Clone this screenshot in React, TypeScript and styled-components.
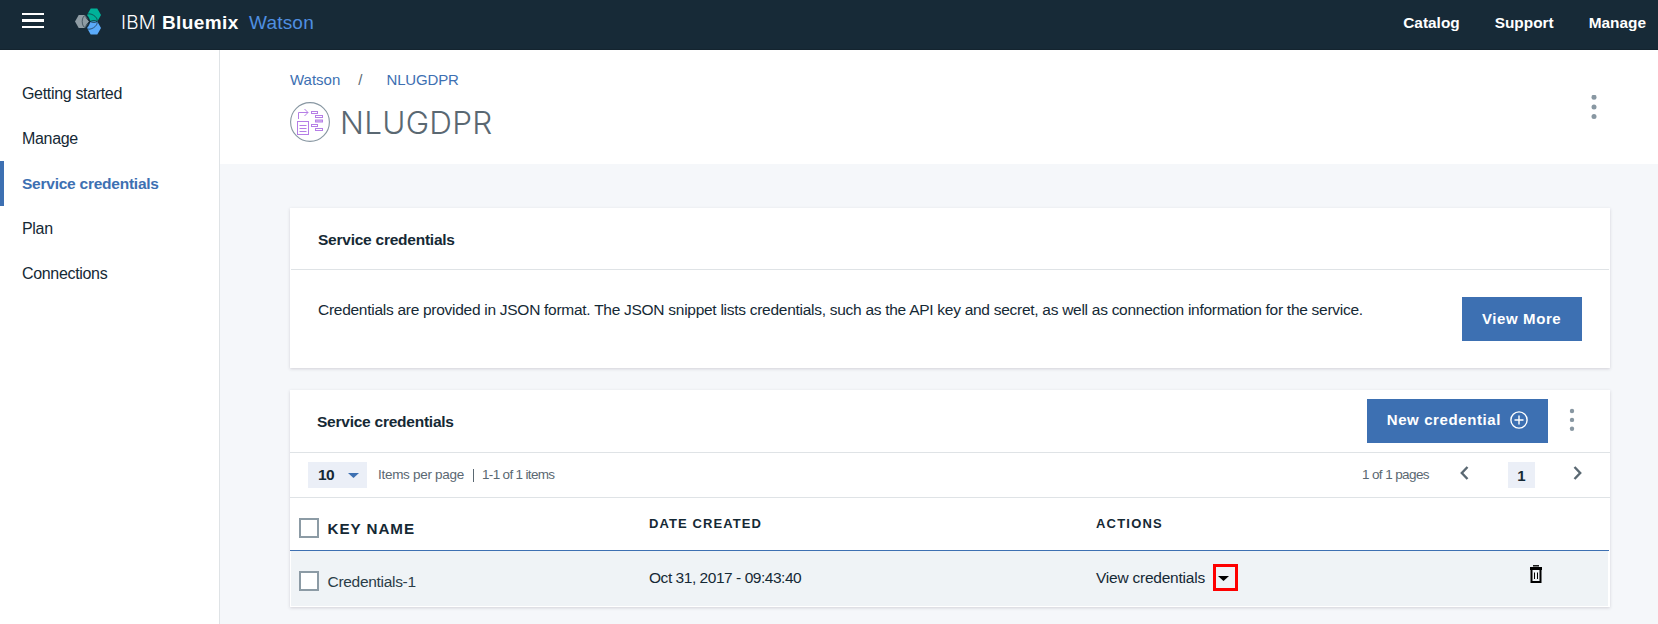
import React from 'react';
import styled, { createGlobalStyle } from 'styled-components';

const Global = createGlobalStyle`
  * { box-sizing: border-box; }
  html, body { margin: 0; }
  body {
    font-family: "Liberation Sans", Arial, sans-serif;
    color: #152935;
    background: #f5f7fa;
    overflow: hidden;
  }
  a { text-decoration: none; color: inherit; }
  button { font-family: inherit; border: 0; padding: 0; background: none; color: inherit; }
`;

const Page = styled.div`
  height: 624px;
  display: flex;
  flex-direction: column;
`;

const TopBar = styled.header`
  height: 50px;
  flex: none;
  background: #172a37;
  border-bottom: 1px solid #14242f;
  color: #fff;
  display: flex;
  align-items: center;
  padding: 0 12px 0 22px;
`;

const MenuButton = styled.button`
  width: 22px;
  height: 15px;
  margin: 0 31px 9px 0;
  svg { display: block; }
`;

const Logo = styled.svg`
  display: block;
  margin: 0 19px 6px 0;
`;

const Brand = styled.div`
  font-size: 19px;
  line-height: 24px;
  margin-bottom: 3px;
  display: flex;
`;

const BrandLight = styled.span`
  font-family: Inter, "Liberation Sans", sans-serif;
  font-weight: 300;
  letter-spacing: 0.2px;
  width: 41px;
`;

const BrandBold = styled.strong`
  letter-spacing: 0.4px;
  width: 87px;
`;

const BrandProduct = styled.span`
  color: #4f8fe0;
  letter-spacing: 0.2px;
`;

const TopNav = styled.nav`
  margin: 0 0 3px auto;
  display: flex;
  gap: 35px;
  font-size: 15.4px;
  font-weight: 700;
`;

const Body = styled.div`
  flex: 1;
  display: flex;
`;

const Sidebar = styled.nav`
  width: 220px;
  flex: none;
  background: #fff;
  border-right: 1px solid #dfe3e6;
  padding-top: 21px;
`;

const SideItem = styled.a<{ $active?: boolean }>`
  display: flex;
  align-items: center;
  height: 45px;
  padding-left: ${p => (p.$active ? 18 : 22)}px;
  border-left: ${p => (p.$active ? '4px solid #3d70b2' : '0')};
  color: ${p => (p.$active ? '#3d70b2' : '#152935')};
  font-weight: ${p => (p.$active ? 700 : 400)};
  font-size: ${p => (p.$active ? 15.5 : 16)}px;
  letter-spacing: ${p => (p.$active ? -0.24 : -0.33)}px;
`;

const Main = styled.main`
  flex: 1;
  min-width: 0;
`;

const PageHeader = styled.div`
  height: 114px;
  background: #fff;
  padding: 20px 59px 0 70px;
  display: flex;
  justify-content: space-between;
`;

const Crumbs = styled.div`
  display: flex;
  font-size: 15px;
  line-height: 20px;
  color: #3d70b2;
`;

const Slash = styled.span`
  color: #5a6872;
  margin: 0 24px 0 18px;
`;

const CrumbCurrent = styled.a`
  letter-spacing: -0.15px;
`;

const TitleRow = styled.div`
  display: flex;
  align-items: center;
  margin-top: 12px;
  gap: 10px;
`;

const Title = styled.h1`
  margin: 0;
  padding-top: 2px;
  font-family: Inter, "Liberation Sans", sans-serif;
  font-weight: 300;
  font-size: 31.5px;
  line-height: 38px;
  color: #5a6872;
  letter-spacing: 0.25px;
`;

const Kebab = styled.svg`
  display: block;
  fill: #8897a2;
`;

const HeaderKebab = styled(Kebab)`
  margin-top: 25px;
`;

const Cards = styled.div`
  padding: 44px 48px 0 70px;
  display: flex;
  flex-direction: column;
  gap: 22px;
`;

const Card = styled.section`
  background: #fff;
  box-shadow: 0 1px 3px rgba(50, 40, 60, 0.18);
`;

const IntroHead = styled.div`
  height: 62px;
  margin: 0 1px;
  padding: 2px 27px 0;
  border-bottom: 1px solid #dfe3e6;
  display: flex;
  align-items: center;
`;

const CardTitle = styled.h2`
  margin: 0;
  font-size: 15.5px;
  line-height: 20px;
  letter-spacing: -0.24px;
`;

const IntroBody = styled.div`
  height: 98px;
  padding: 27px 28px 0;
  display: flex;
  justify-content: space-between;
  align-items: flex-start;
`;

const IntroText = styled.p`
  margin: 3px 0 0;
  font-size: 15.5px;
  line-height: 20px;
  letter-spacing: -0.276px;
  white-space: nowrap;
`;

const PrimaryButton = styled.button`
  height: 44px;
  min-width: 120px;
  padding: 0 20px 2px;
  background: #3d70b2;
  color: #fff;
  font-size: 15px;
  font-weight: 700;
  letter-spacing: 0.6px;
  display: flex;
  align-items: center;
  white-space: nowrap;
  svg { margin-left: 9px; }
`;

const TableHead = styled.div`
  height: 63px;
  padding: 2px 35px 0 27px;
  border-bottom: 1px solid #dfe3e6;
  display: flex;
  align-items: center;
`;

const HeadActions = styled.div`
  margin-left: auto;
  display: flex;
  align-items: center;
  gap: 21px;
  padding-bottom: 3px;
`;

const HeadKebab = styled(Kebab)`
  margin-bottom: 1px;
`;

const Pager = styled.div`
  height: 45px;
  padding: 0 28px 0 18px;
  border-bottom: 1px solid #dfe3e6;
  display: flex;
  align-items: center;
  color: #5a6872;
  font-size: 13.5px;
`;

const SizeSelect = styled.div`
  width: 59px;
  height: 26px;
  padding: 0 8px 0 10px;
  margin-right: 11px;
  background: #ebeff7;
  color: #152935;
  font-weight: 700;
  font-size: 15.5px;
  letter-spacing: -0.6px;
  display: flex;
  align-items: center;
  justify-content: space-between;
`;

const PagerText = styled.span<{ $tracking: number }>`
  letter-spacing: ${p => p.$tracking}px;
  margin-bottom: 2px;
  white-space: nowrap;
`;

const Divider = styled.span`
  width: 1px;
  height: 13px;
  background: #5a6872;
  margin: 0 8px 0 9px;
`;

const PageNav = styled.div`
  margin-left: auto;
  display: flex;
  align-items: center;
`;

const Chevron = styled.svg`
  display: block;
  fill: none;
  stroke: #5a6872;
  stroke-width: 2.4;
  margin-bottom: 4px;
`;

const PrevChevron = styled(Chevron)`
  margin-left: 31px;
`;

const PageNumber = styled.span`
  width: 27px;
  height: 26px;
  margin: 0 38px 0 39px;
  background: #ebeff7;
  color: #152935;
  font-weight: 700;
  font-size: 15px;
  display: flex;
  align-items: center;
  justify-content: center;
`;

const Row = styled.div<{ $head?: boolean }>`
  display: grid;
  grid-template-columns: 359px 447px 1fr 78px;
  height: ${p => (p.$head ? 53 : 56)}px;
  margin-right: ${p => (p.$head ? 1 : 0)}px;
  border-bottom: 1px solid ${p => (p.$head ? '#3d70b2' : '#fff')};
  border-right: ${p => (p.$head ? 0 : 2)}px solid #fff;
  background: ${p => (p.$head ? '#fff' : '#eff3f6')};
  box-shadow: ${p => (p.$head ? 'none' : 'inset 1px 0 #fff')};
`;

const KeyCell = styled.div`
  display: flex;
  align-items: flex-start;
  padding: 20px 0 0 9px;
`;

const Checkbox = styled.span`
  width: 20px;
  height: 20px;
  border: 2px solid #8c9ba5;
  background: #fff;
  margin-right: 8.5px;
`;

const KeyHeading = styled.span`
  font-size: 15.2px;
  font-weight: 700;
  letter-spacing: 0.95px;
  line-height: 22px;
`;

const KeyName = styled.span`
  font-size: 15.5px;
  letter-spacing: -0.3px;
  line-height: 22px;
  color: #2b3d48;
`;

const ColumnHeading = styled.span<{ $tracking: number }>`
  padding-top: 16px;
  font-size: 13px;
  font-weight: 700;
  letter-spacing: ${p => p.$tracking}px;
  line-height: 20px;
`;

const Cell = styled.div`
  display: flex;
  align-items: flex-start;
  padding-top: 17px;
  font-size: 15.5px;
  line-height: 20px;
`;

const DateText = styled.span`
  letter-spacing: -0.46px;
`;

const ViewText = styled.span`
  letter-spacing: -0.23px;
  margin-right: 8px;
`;

const Expander = styled.button`
  width: 25px;
  height: 27px;
  margin-top: -4px;
  border: 3px solid #fe0000;
  display: flex;
  align-items: center;
  padding: 1px 0 0 2px;
`;

const DeleteButton = styled.button`
  align-self: start;
  margin-top: 14px;
  width: 12px;
  svg { display: block; }
`;

const Hex = ({ x, y, fill }: { x: number; y: number; fill: string }) => (
  <polygon
    fill={fill}
    points={`${x},${y + 6.5} ${x + 3.7},${y} ${x + 10.3},${y} ${x + 14},${y + 6.5} ${x + 10.3},${y + 13} ${x + 3.7},${y + 13}`}
  />
);

const Dots = ({ gap, r }: { gap: number; r: number }) => (
  <>
    {[0, 1, 2].map(i => (
      <circle key={i} cx={3} cy={3 + i * gap} r={r} />
    ))}
  </>
);

const sideItems = ['Getting started', 'Manage', 'Service credentials', 'Plan', 'Connections'];

export default function App() {
  return (
    <Page>
      <Global />
      <TopBar>
        <MenuButton aria-label="Menu">
          <svg width="22" height="15" fill="#fff">
            <rect width="22" height="2" />
            <rect y="6" width="22" height="3" />
            <rect y="13" width="22" height="2" />
          </svg>
        </MenuButton>
        <Logo width="27" height="27" viewBox="0 0 27 27">
          <Hex x={0} y={7} fill="#8f9ca4" />
          <Hex x={12} y={0.5} fill="#00b299" />
          <Hex x={12} y={13.5} fill="#5aaafa" />
          <g fill="none" stroke="#172a37" strokeWidth="0.6">
            <ellipse cx="10.8" cy="13.5" rx="3.6" ry="6.2" />
            <ellipse cx="16.5" cy="10.2" rx="6.2" ry="3.6" transform="rotate(30 16.5 10.2)" />
            <ellipse cx="16.5" cy="16.8" rx="6.2" ry="3.6" transform="rotate(-30 16.5 16.8)" />
          </g>
        </Logo>
        <Brand>
          <BrandLight>IBM</BrandLight>
          <BrandBold>Bluemix</BrandBold>
          <BrandProduct>Watson</BrandProduct>
        </Brand>
        <TopNav>
          <a>Catalog</a>
          <a>Support</a>
          <a>Manage</a>
        </TopNav>
      </TopBar>
      <Body>
        <Sidebar>
          {sideItems.map(item => (
            <SideItem key={item} $active={item === 'Service credentials'}>{item}</SideItem>
          ))}
        </Sidebar>
        <Main>
          <PageHeader>
            <div>
              <Crumbs>
                <a>Watson</a>
                <Slash>/</Slash>
                <CrumbCurrent>NLUGDPR</CrumbCurrent>
              </Crumbs>
              <TitleRow>
                <svg width="40" height="40" fill="none">
                  <circle cx="20" cy="20" r="19.4" stroke="#8897a2" strokeWidth="1.1" />
                  <g stroke="#b57ee6">
                    <path d="M8.5 17V10.5H18M14.5 7L18 10.5L14.5 14" />
                    <rect x="7.5" y="19.5" width="11" height="13" />
                    <path d="M9.5 23.5H16.5M9.5 26.5H16.5M9.5 29.5H16.5" />
                    <rect x="21.5" y="9.5" width="6" height="2" />
                    <rect x="25.5" y="13.5" width="7" height="2" />
                    <rect x="25.5" y="18" width="7" height="2" fill="#d9bdf3" />
                    <rect x="21.5" y="22.5" width="6" height="2" />
                    <rect x="25.5" y="26.5" width="7" height="2" />
                  </g>
                </svg>
                <Title>NLUGDPR</Title>
              </TitleRow>
            </div>
            <HeaderKebab width="10" height="26"><g transform="translate(2 -0.8)"><Dots gap={9.7} r={2.5} /></g></HeaderKebab>
          </PageHeader>
          <Cards>
            <Card>
              <IntroHead><CardTitle>Service credentials</CardTitle></IntroHead>
              <IntroBody>
                <IntroText>
                  Credentials are provided in JSON format. The JSON snippet lists credentials, such as the API key and secret, as well as connection information for the service.
                </IntroText>
                <PrimaryButton>View More</PrimaryButton>
              </IntroBody>
            </Card>
            <Card>
              <TableHead>
                <CardTitle>Service credentials</CardTitle>
                <HeadActions>
                  <PrimaryButton>
                    New credential
                    <svg width="18" height="18" fill="none" stroke="#fff" strokeWidth="1.4">
                      <circle cx="9" cy="9" r="8.1" />
                      <path d="M9 4.5V13.5M4.5 9H13.5" />
                    </svg>
                  </PrimaryButton>
                  <HeadKebab width="6" height="24"><Dots gap={8.9} r={2.2} /></HeadKebab>
                </HeadActions>
              </TableHead>
              <Pager>
                <SizeSelect>
                  10
                  <svg width="11" height="5"><path d="M0 0H11L5.5 5Z" fill="#3d70b2" /></svg>
                </SizeSelect>
                <PagerText $tracking={-0.29}>Items per page</PagerText>
                <Divider />
                <PagerText $tracking={-0.67}>1-1 of 1 items</PagerText>
                <PageNav>
                  <PagerText $tracking={-0.6}>1 of 1 pages</PagerText>
                  <PrevChevron width="9" height="14"><path d="M7.5 1L1.8 7L7.5 13" /></PrevChevron>
                  <PageNumber>1</PageNumber>
                  <Chevron width="9" height="14"><path d="M1.5 1L7.2 7L1.5 13" /></Chevron>
                </PageNav>
              </Pager>
              <Row $head>
                <KeyCell><Checkbox /><KeyHeading>KEY NAME</KeyHeading></KeyCell>
                <ColumnHeading $tracking={1.1}>DATE CREATED</ColumnHeading>
                <ColumnHeading $tracking={1.2}>ACTIONS</ColumnHeading>
              </Row>
              <Row>
                <KeyCell><Checkbox /><KeyName>Credentials-1</KeyName></KeyCell>
                <Cell><DateText>Oct 31, 2017 - 09:43:40</DateText></Cell>
                <Cell>
                  <ViewText>View credentials</ViewText>
                  <Expander aria-label="Expand">
                    <svg width="11" height="5"><path d="M0 0H11L5.5 5Z" /></svg>
                  </Expander>
                </Cell>
                <DeleteButton aria-label="Delete">
                  <svg width="12" height="18" fill="none" stroke="#000">
                    <path d="M3 0.8H9" strokeWidth="1.4" />
                    <path d="M0 3.5H12" strokeWidth="3" />
                    <path d="M1.5 5V17H10.5V5" strokeWidth="2" />
                    <path d="M4.5 7.5V14M7.5 7.5V14" />
                  </svg>
                </DeleteButton>
              </Row>
            </Card>
          </Cards>
        </Main>
      </Body>
    </Page>
  );
}
